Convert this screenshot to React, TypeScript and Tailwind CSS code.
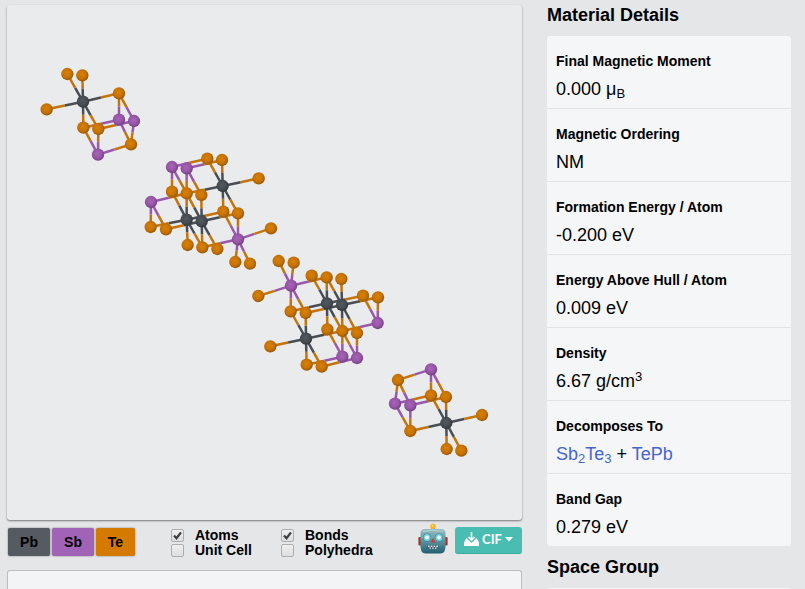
import { Fragment, type ReactNode } from "react";

type Element = "Pb" | "Sb" | "Te";
type Atom = [Element, number, number];
type Bond = [number, number];

interface Cluster {
  x: number;
  y: number;
  atoms: Atom[];
  bonds: Bond[];
}

const bondColor: Record<Element, string> = { Pb: "#484e53", Sb: "#9a58aa", Te: "#c47408" };

const clusters: Cluster[] = [
  {
    x: 30,
    y: 55,
    atoms: [
      ["Te", 112, 57], ["Te", 157, 61], ["Te", 50, 163], ["Pb", 159, 140],
      ["Te", 267, 115], ["Te", 160, 218], ["Te", 205, 222], ["Sb", 267, 194],
      ["Sb", 312, 198], ["Te", 303, 268], ["Sb", 204, 299],
    ],
    bonds: [
      [3, 0], [3, 1], [3, 2], [3, 4], [3, 5], [3, 6], [4, 7], [4, 8], [6, 8],
      [5, 7], [5, 10], [6, 10], [9, 7], [9, 8], [9, 10],
    ],
  },
  {
    x: 140,
    y: 145,
    atoms: [
      ["Sb", 96, 66], ["Sb", 140, 70], ["Te", 202, 41], ["Te", 246, 45],
      ["Te", 356, 100], ["Pb", 248, 123], ["Te", 96, 140], ["Te", 140, 145],
      ["Te", 184, 150], ["Sb", 33, 171], ["Te", 250, 200], ["Te", 294, 205],
      ["Te", 32, 246], ["Te", 78, 253], ["Pb", 140, 224], ["Pb", 185, 229],
      ["Te", 393, 250], ["Sb", 294, 283], ["Te", 143, 300], ["Te", 187, 307],
      ["Te", 232, 312], ["Te", 286, 351], ["Te", 330, 356],
    ],
    bonds: [
      [1, 3], [0, 2], [0, 6], [0, 7], [1, 7], [1, 8], [5, 2], [5, 3], [5, 4],
      [5, 7], [5, 10], [5, 11], [9, 7], [9, 12], [9, 13], [15, 13], [15, 11],
      [15, 7], [15, 8], [15, 19], [15, 20], [14, 6], [14, 7], [14, 12],
      [14, 10], [14, 18], [14, 19], [17, 10], [17, 11], [17, 16], [17, 19],
      [17, 21], [17, 22],
    ],
  },
  {
    x: 245,
    y: 250,
    atoms: [
      ["Te", 101, 33], ["Te", 146, 38], ["Te", 40, 138], ["Sb", 138, 107],
      ["Te", 200, 77], ["Te", 245, 82], ["Te", 289, 87], ["Te", 137, 184],
      ["Te", 182, 189], ["Pb", 246, 160], ["Pb", 291, 165], ["Te", 354, 137],
      ["Te", 399, 142], ["Sb", 398, 219], ["Pb", 183, 266], ["Te", 76, 289],
      ["Te", 247, 238], ["Te", 292, 243], ["Te", 336, 249], ["Te", 185, 344],
      ["Te", 230, 350], ["Sb", 292, 320], ["Sb", 336, 324],
    ],
    bonds: [
      [3, 0], [3, 1], [3, 2], [3, 5], [3, 7], [3, 8], [10, 5], [10, 6],
      [10, 8], [10, 12], [10, 17], [10, 18], [9, 4], [9, 5], [9, 7], [9, 11],
      [9, 16], [9, 17], [13, 11], [13, 12], [13, 17], [14, 7], [14, 8],
      [14, 15], [14, 17], [14, 19], [14, 20], [22, 17], [22, 18], [22, 20],
      [21, 16], [21, 17], [21, 19],
    ],
  },
  {
    x: 380,
    y: 355,
    atoms: [
      ["Te", 54, 75], ["Sb", 153, 43], ["Sb", 45, 146], ["Sb", 91, 151],
      ["Te", 153, 121], ["Te", 198, 126], ["Te", 91, 228], ["Pb", 199, 204],
      ["Te", 306, 180], ["Te", 200, 282], ["Te", 244, 287],
    ],
    bonds: [
      [0, 1], [0, 2], [0, 3], [1, 4], [1, 5], [3, 5], [2, 4], [2, 6], [3, 6],
      [7, 4], [7, 5], [7, 6], [7, 8], [7, 9], [7, 10],
    ],
  },
];

function CrystalStructure() {
  return (
    <svg viewBox="7 5 515 515" className="block h-auto w-full" role="img" aria-label="Crystal structure">
      <defs>
        <radialGradient id="atom-Pb" cx="0.45" cy="0.42" r="0.6">
          <stop offset="0" stopColor="#53595e" />
          <stop offset="0.6" stopColor="#464c51" />
          <stop offset="1" stopColor="#303438" />
        </radialGradient>
        <radialGradient id="atom-Sb" cx="0.45" cy="0.42" r="0.6">
          <stop offset="0" stopColor="#a864ba" />
          <stop offset="0.6" stopColor="#9655a6" />
          <stop offset="1" stopColor="#703c7d" />
        </radialGradient>
        <radialGradient id="atom-Te" cx="0.45" cy="0.42" r="0.6">
          <stop offset="0" stopColor="#d98005" />
          <stop offset="0.6" stopColor="#c67204" />
          <stop offset="1" stopColor="#945403" />
        </radialGradient>
      </defs>
      {clusters.map((cluster, c) => (
        <g key={c} transform={`translate(${cluster.x} ${cluster.y}) scale(${1 / 3})`}>
          {cluster.bonds.map(([from, to]) => {
            const [a, ax, ay] = cluster.atoms[from];
            const [b, bx, by] = cluster.atoms[to];
            const mx = (ax + bx) / 2;
            const my = (ay + by) / 2;
            return (
              <Fragment key={`${from}-${to}`}>
                <line x1={ax} y1={ay} x2={mx} y2={my} stroke={bondColor[a]} strokeWidth="7.5" />
                <line x1={mx} y1={my} x2={bx} y2={by} stroke={bondColor[b]} strokeWidth="7.5" />
              </Fragment>
            );
          })}
          {cluster.atoms.map(([element, x, y], i) => (
            <circle key={i} cx={x} cy={y} r="18.5" fill={`url(#atom-${element})`} />
          ))}
        </g>
      ))}
    </svg>
  );
}

function Robot() {
  return (
    <svg viewBox="0 0 30 32" className="h-8 w-[30px]" aria-hidden="true">
      <defs>
        <linearGradient id="robot-face" x1="0" y1="0" x2="0" y2="1">
          <stop offset="0" stopColor="#9dbcc2" />
          <stop offset="0.45" stopColor="#5f99a5" />
          <stop offset="1" stopColor="#245d70" />
        </linearGradient>
      </defs>
      <rect x="13" y="4" width="4" height="4" fill="#d5651f" />
      <circle cx="15" cy="3.2" r="2.8" fill="#f5b62c" />
      <circle cx="14.4" cy="2.5" r="1" fill="#ffe079" />
      <rect x="0.4" y="14" width="4" height="8.5" rx="1.2" fill="#a8332d" />
      <rect x="25.6" y="14" width="4" height="8.5" rx="1.2" fill="#a8332d" />
      <path d="M7 6h16q4.500 0 4.500 4.500v12.500q0 7.500-5 7.500h-15q-5 0-5-7.500v-12.500q0-4.500 4.500-4.500Z" fill="url(#robot-face)" />
      <path d="M5 8.500Q15 6 25 8.500" fill="none" stroke="#b5d3d6" strokeWidth="1" />
      <circle cx="9" cy="14.500" r="4" fill="#3d8193" />
      <circle cx="21" cy="14.500" r="4" fill="#3d8193" />
      <circle cx="9" cy="14.500" r="3.500" fill="#6fd3de" />
      <circle cx="21" cy="14.500" r="3.500" fill="#6fd3de" />
      <circle cx="9" cy="14.500" r="1.900" fill="#f4ffff" />
      <circle cx="21" cy="14.500" r="1.900" fill="#f4ffff" />
      <path d="m15 15 2.500 4.500h-5Z" fill="#cf3d2e" />
      <rect x="9.500" y="22" width="11" height="4" rx="0.800" fill="#315d6b" />
      <path d="M10 22.500h1.600V24H10Zm2.800 0h1.600V24h-1.600Zm2.800 0h1.600V24h-1.600Zm2.800 0H20V24h-1.600Zm-7 2H13v1.200h-1.600Zm2.800 0h1.600v1.200h-1.600Zm2.800 0h1.600v1.200H17Z" fill="#edf4f4" />
    </svg>
  );
}

function Option({ label, checked = false }: { label: string; checked?: boolean }) {
  return (
    <label className="flex h-[15px] items-center gap-[11px] text-sm leading-[15px] font-bold">
      <span className="relative size-[13px]">
        <input
          type="checkbox"
          defaultChecked={checked}
          className="peer block size-[13px] appearance-none rounded-xs border border-[#adadad] bg-linear-to-b from-[#efefef] to-[#dedede]"
        />
        <svg
          viewBox="0 0 13 13"
          className="pointer-events-none absolute inset-0 hidden size-[13px] peer-checked:block"
          aria-hidden="true"
        >
          <path d="m3 6.500 2.500 2.700L10 3.300" fill="none" stroke="#3e3e3e" strokeWidth="2.200" />
        </svg>
      </span>
      {label}
    </label>
  );
}

function Detail({ name, children }: { name: string; children: ReactNode }) {
  return (
    <div className="h-[73px] border-b border-[#e1e3e5] px-[9px] pt-[15px] last:h-[72px] last:border-b-0">
      <dt className="text-sm leading-5 font-bold">{name}</dt>
      <dd className="mt-0.5 text-lg leading-8">{children}</dd>
    </div>
  );
}

const subscript = "text-[13px] leading-none";
const legendButton = "h-7 rounded-xs text-sm font-bold shadow-[0_0_2px_#777]";

export default function App() {
  return (
    <div
      className="flex h-screen gap-[25px] overflow-hidden bg-[#e4e6e8] pr-3.5 pl-[7px] text-black"
      style={{ fontFamily: '"Liberation Sans", Arial, sans-serif' }}
    >
      <main className="flex min-w-0 flex-1 flex-col pt-[5px]">
        <section className="rounded-[3px] bg-[#e9ebed] shadow-[0_1px_2px_#777]">
          <CrystalStructure />
        </section>
        <div className="mt-[3px] flex h-9 items-start">
          <div className="flex gap-0.5 pt-[5px] pl-px">
            <button className={`${legendButton} w-[42px] bg-[#565a61]`}>Pb</button>
            <button className={`${legendButton} w-[42px] bg-[#a163b5]`}>Sb</button>
            <button className={`${legendButton} w-[39px] bg-[#d57a00]`}>Te</button>
          </div>
          <div className="ml-9 flex pt-[5px]">
            <div className="w-[110px]">
              <Option label="Atoms" checked />
              <Option label="Unit Cell" />
            </div>
            <div>
              <Option label="Bonds" checked />
              <Option label="Polyhedra" />
            </div>
          </div>
          <div className="ml-auto flex items-start gap-[7px]">
            <button aria-label="Robot">
              <Robot />
            </button>
            <button className="mt-1 flex h-[27px] w-[67px] items-center justify-center gap-[3px] rounded-[3px] border-b border-[#3aa99d] bg-[#49bdb1] pb-0.5 text-white">
              <svg viewBox="0 0 15 15" className="size-[15px]" aria-hidden="true">
                <path d="M2.500 6 0 10.500V14h15v-3.500L12.500 6Z" fill="currentColor" />
                <path d="M7.500 2v5M4 5l3.500 3.500L11 5" fill="none" stroke="#49bdb1" strokeWidth="3.600" />
                <path d="M7.500 0v7.500M4.500 5l3 3 3-3" fill="none" stroke="currentColor" strokeWidth="1.600" />
              </svg>
              <span className="font-[Lato] text-[13px] leading-5 font-bold">CIF</span>
              <svg viewBox="0 0 8 5" className="h-[5px] w-2" aria-hidden="true">
                <path d="M0 0h8L4 4.500Z" fill="currentColor" />
              </svg>
            </button>
          </div>
        </div>
        <section className="mt-[11px] flex-1 rounded-t-[3px] border border-b-0 border-[#bbbdbf] bg-[#f3f4f5]" />
      </main>

      <aside className="w-[244px] shrink-0 pt-1">
        <h2 className="text-lg leading-[22px] font-bold">Material Details</h2>
        <dl className="mt-2.5 rounded-[3px] bg-[#f4f6f8]">
          <Detail name="Final Magnetic Moment">
            0.000 μ<sub className={subscript}>B</sub>
          </Detail>
          <Detail name="Magnetic Ordering">NM</Detail>
          <Detail name="Formation Energy / Atom">-0.200 eV</Detail>
          <Detail name="Energy Above Hull / Atom">0.009 eV</Detail>
          <Detail name="Density">
            6.67 g/cm<sup className={subscript}>3</sup>
          </Detail>
          <Detail name="Decomposes To">
            <a href="#sb2te3" className="text-[#4864d0]">
              Sb<sub className={subscript}>2</sub>Te<sub className={subscript}>3</sub>
            </a>
            {" + "}
            <a href="#tepb" className="text-[#4864d0]">TePb</a>
          </Detail>
          <Detail name="Band Gap">0.279 eV</Detail>
        </dl>
        <h2 className="mt-2.5 text-lg leading-[22px] font-bold">Space Group</h2>
        <div className="mt-2.5 h-20 rounded-[3px] bg-[#f4f6f8]" />
      </aside>
    </div>
  );
}
